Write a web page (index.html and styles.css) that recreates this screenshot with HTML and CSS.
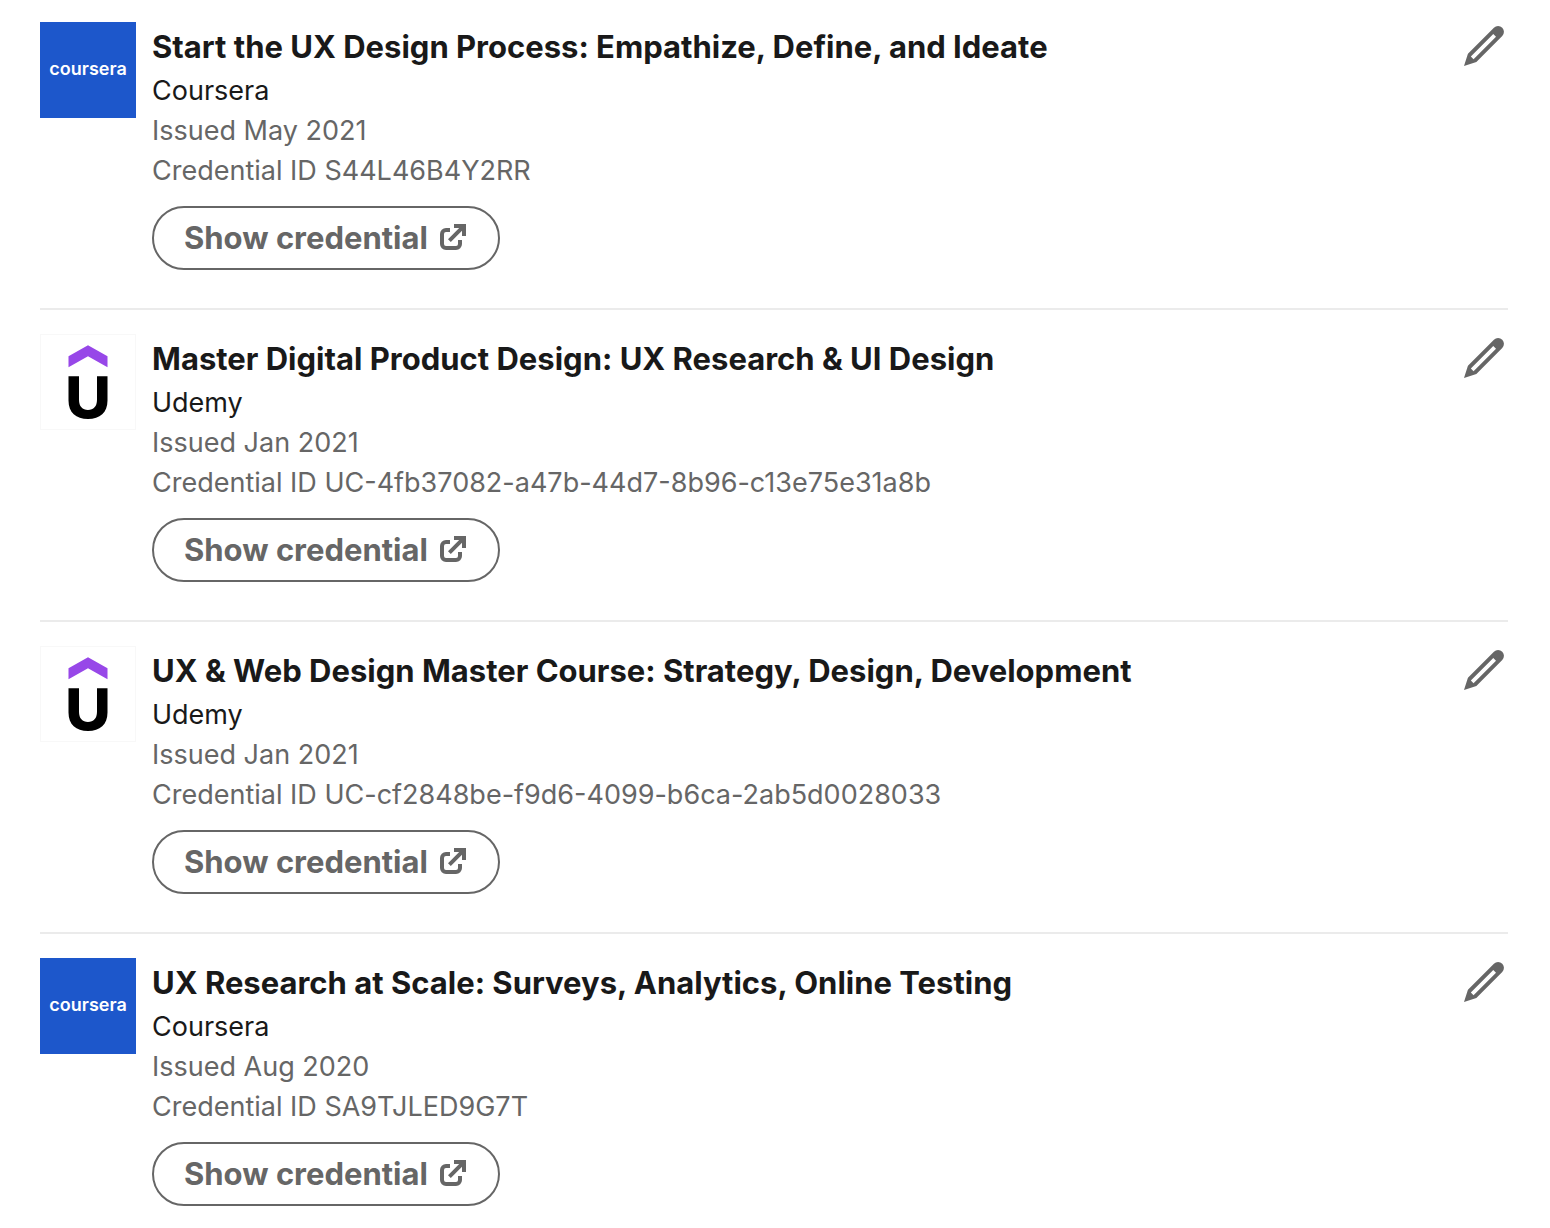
FILE: index.html
```
<!DOCTYPE html>
<html lang="en">
	<head>
		<meta charset="UTF-8" />
		<meta name="viewport" content="width=device-width, initial-scale=1" />
		<title>Licenses &amp; certifications</title>
		<link rel="stylesheet" href="styles.css">
	</head>
	<body>
		<!-- shared icons and logos -->
		<svg class="sprite" aria-hidden="true">
			<symbol id="pencil" viewBox="0 0 24 24">
				<path d="M21.13 2.86a3 3 0 00-4.17 0l-13 13L2 22l6.19-2L21.13 7a3 3 0 000-4.16zM6.77 18.57l-1.35-1.34L16.64 6 18 7.35z" />
			</symbol>
			<symbol id="external" viewBox="0 0 16 16">
				<path d="M15 1v6h-2V4.41L7.41 10 6 8.59 11.59 3H9V1zm-4 10a1 1 0 01-1 1H5a1 1 0 01-1-1V6a1 1 0 011-1h2V3H5a3 3 0 00-3 3v5a3 3 0 003 3h5a3 3 0 003-3V9h-2z" />
			</symbol>
			<symbol id="udemy" viewBox="0 0 96 96">
				<path fill="#9747e8" d="M48 11.3l19.500 11v10.900L48 22.300 28.500 33.200V22.300z" />
				<path fill="#000" d="M28.500 42.300H39v23.400c0 6.600 3.500 10.200 9 10.200s9-3.600 9-10.200V42.300h10.500v24.200C67.500 78.500 60 85 48 85s-19.500-6.500-19.500-18.500z" />
			</symbol>
		</svg>

		<ul class="cert-list">
			<li class="cert">
				<div class="logo coursera">coursera</div>
				<div class="details">
					<h3>Start the UX Design Process: Empathize, Define, and Ideate</h3>
					<p>Coursera</p>
					<p class="muted">Issued May 2021</p>
					<p class="muted">Credential ID S44L46B4Y2RR</p>
					<a class="show-btn" href="#">Show credential <svg><use href="#external" /></svg></a>
				</div>
				<button class="edit-btn" aria-label="Edit certification"><svg><use href="#pencil" /></svg></button>
			</li>

			<li class="cert">
				<div class="logo udemy"><svg role="img" aria-label="Udemy"><use href="#udemy" /></svg></div>
				<div class="details">
					<h3>Master Digital Product Design: UX Research &amp; UI Design</h3>
					<p>Udemy</p>
					<p class="muted">Issued Jan 2021</p>
					<p class="muted">Credential ID UC-4fb37082-a47b-44d7-8b96-c13e75e31a8b</p>
					<a class="show-btn" href="#">Show credential <svg><use href="#external" /></svg></a>
				</div>
				<button class="edit-btn" aria-label="Edit certification"><svg><use href="#pencil" /></svg></button>
			</li>

			<li class="cert">
				<div class="logo udemy"><svg role="img" aria-label="Udemy"><use href="#udemy" /></svg></div>
				<div class="details">
					<h3>UX &amp; Web Design Master Course: Strategy, Design, Development</h3>
					<p>Udemy</p>
					<p class="muted">Issued Jan 2021</p>
					<p class="muted">Credential ID UC-cf2848be-f9d6-4099-b6ca-2ab5d0028033</p>
					<a class="show-btn" href="#">Show credential <svg><use href="#external" /></svg></a>
				</div>
				<button class="edit-btn" aria-label="Edit certification"><svg><use href="#pencil" /></svg></button>
			</li>

			<li class="cert">
				<div class="logo coursera">coursera</div>
				<div class="details">
					<h3>UX Research at Scale: Surveys, Analytics, Online Testing</h3>
					<p>Coursera</p>
					<p class="muted">Issued Aug 2020</p>
					<p class="muted">Credential ID SA9TJLED9G7T</p>
					<a class="show-btn" href="#">Show credential <svg><use href="#external" /></svg></a>
				</div>
				<button class="edit-btn" aria-label="Edit certification"><svg><use href="#pencil" /></svg></button>
			</li>
		</ul>
	</body>
</html>
```
FILE: styles.css
```
* {
	box-sizing: border-box;
}
body {
	margin: 0;
	background: #fff;
	color: #191919;
	font-family: Inter, "Liberation Sans", sans-serif;
	font-size: 27px;
	line-height: 40px;
}
h3,
p {
	margin: 0;
}
.sprite {
	display: none;
}
.cert-list {
	list-style: none;
	margin: 0;
	padding: 22px 42px 22px 40px;
}
.cert {
	display: flex;
	align-items: flex-start;
	gap: 16px;
	padding: 24px 0 38px;
	border-bottom: 2px solid #ebebeb;
}
.cert:first-child {
	padding-top: 0;
}
.cert:last-child {
	padding-bottom: 0;
	border-bottom: none;
}
.logo {
	flex: none;
	display: flex;
	align-items: center;
	justify-content: center;
	width: 96px;
	height: 96px;
}
.logo svg {
	width: 96px;
	height: 96px;
}
.coursera {
	padding-bottom: 2px;
	background: #1d57cb;
	color: #fff;
	font-size: 18px;
	font-weight: 600;
}
.udemy {
	box-shadow: inset 0 0 0 1px #f8f8f8;
}
.details {
	flex: 1;
	min-width: 0;
	padding-top: 1px;
	overflow-wrap: anywhere;
}
.details h3 {
	font-size: 31px;
	font-weight: 650;
	line-height: 48px;
}
.muted {
	color: #666;
}
.show-btn {
	display: inline-flex;
	align-items: center;
	gap: 8px;
	height: 64px;
	margin-top: 15px;
	padding: 0 30px;
	border: 2px solid #666;
	border-radius: 32px;
	color: #666;
	font-size: 31px;
	font-weight: 650;
	text-decoration: none;
	vertical-align: top;
}
.show-btn svg {
	width: 32px;
	height: 32px;
	fill: currentColor;
}
.show-btn:hover {
	background: #f3f3f3;
}
.edit-btn {
	flex: none;
	padding: 0;
	border: none;
	background: none;
	color: #666;
	cursor: pointer;
}
.edit-btn svg {
	display: block;
	width: 48px;
	height: 48px;
	fill: currentColor;
}
```
